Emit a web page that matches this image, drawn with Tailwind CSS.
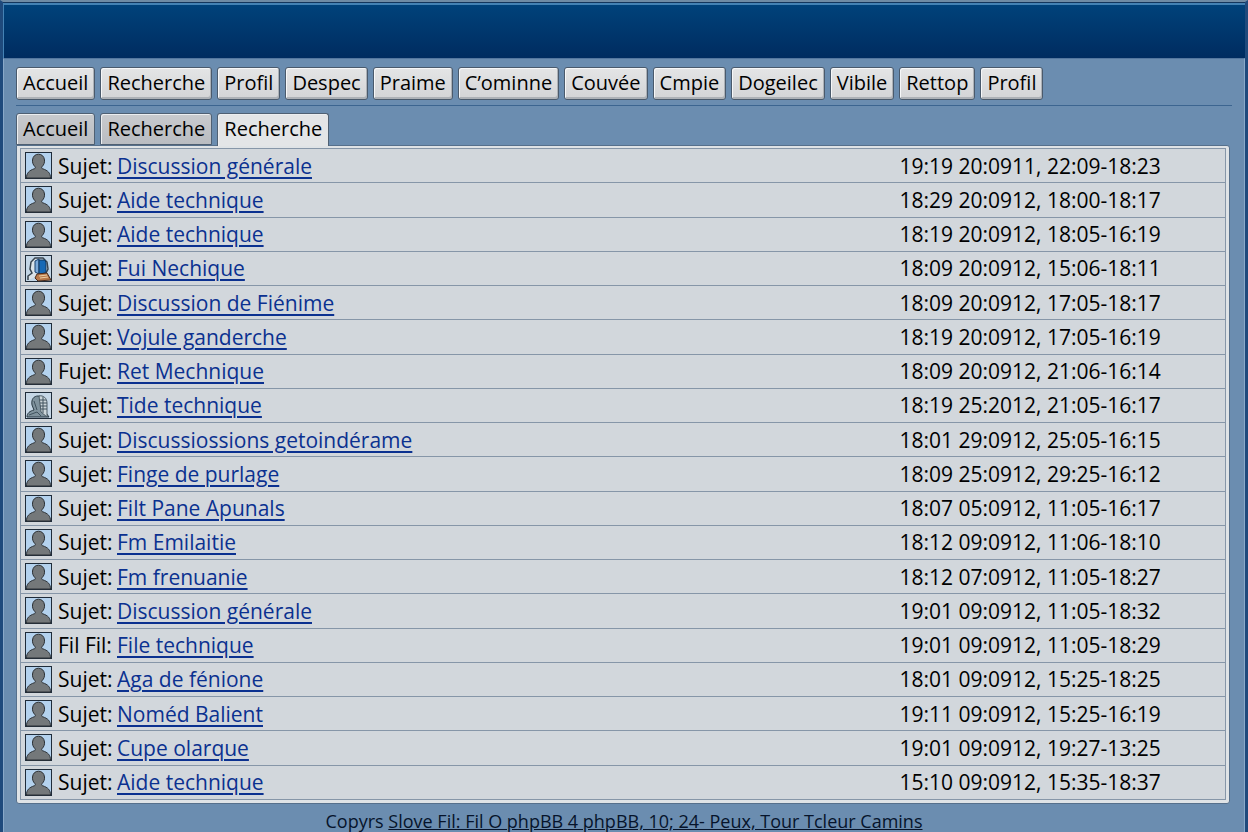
<!DOCTYPE html>
<html lang="fr">

<head>
    <meta charset="UTF-8" />
    <meta name="viewport" content="width=device-width, initial-scale=1.0" />
    <script src="https://cdn.jsdelivr.net/npm/@tailwindcss/browser@4"></script>
    <title>Forum - Recherche</title>
</head>

<body class="h-screen overflow-hidden flex flex-col bg-[#6b8db0] border-x-3 border-t-2 border-x-[#1f4a7c] border-t-[#6f8ba4] font-['Open_Sans','Noto_Sans',sans-serif] text-[21px] leading-7 text-black">
    <header class="h-14 shrink-0 border-t border-[#14365c] shadow-[inset_1px_2px_0_#4482b4] bg-linear-to-b from-[#00437b] to-[#002c60]"></header>

    <div class="flex-1 min-h-0 flex flex-col px-3 pt-2 border-x border-t border-[#8aa9c9] border-t-[#54779f]">
        <nav id="main-nav" class="flex gap-[5px] pb-[5px] border-b border-[#3c6590] text-[20px]"></nav>

        <div id="tabs" class="flex gap-[5px] pt-[7px] text-[20px]"></div>

        <main class="flex-1 min-h-0 p-[3px] pt-[2px] mr-[2px] -mt-px bg-[#dfe3e6] border border-[#56708c] rounded-b-[3px] rounded-tr-[3px]">
            <table class="w-full h-full border-collapse border border-[#8696a8] bg-[#d2d7dc]">
                <tbody></tbody>
            </table>
        </main>

        <footer class="h-7 shrink-0 pt-[3px] text-center text-[18px] text-[#06142b] whitespace-nowrap">
            Copyrs <a href="#" class="underline">Slove Fil: Fil O phpBB 4 phpBB, 10; 24- Peux, Tour Tcleur Camins</a>
        </footer>
    </div>
</body>

<script>
    const menu = ["Accueil", "Recherche", "Profil", "Despec", "Praime", "C’ominne", "Couvée", "Cmpie", "Dogeilec", "Vibile", "Rettop", "Profil"];
    const tabs = ["Accueil", "Recherche", "Recherche"];

    const topics = [
        ["Sujet:", "Discussion générale", "19:19 20:0911, 22:09-18:23"],
        ["Sujet:", "Aide technique", "18:29 20:0912, 18:00-18:17"],
        ["Sujet:", "Aide technique", "18:19 20:0912, 18:05-16:19"],
        ["Sujet:", "Fui Nechique", "18:09 20:0912, 15:06-18:11", "book"],
        ["Sujet:", "Discussion de Fiénime", "18:09 20:0912, 17:05-18:17"],
        ["Sujet:", "Vojule ganderche", "18:19 20:0912, 17:05-16:19"],
        ["Fujet:", "Ret Mechnique", "18:09 20:0912, 21:06-16:14"],
        ["Sujet:", "Tide technique", "18:19 25:2012, 21:05-16:17", "sketch"],
        ["Sujet:", "Discussiossions getoindérame", "18:01 29:0912, 25:05-16:15"],
        ["Sujet:", "Finge de purlage", "18:09 25:0912, 29:25-16:12"],
        ["Sujet:", "Filt Pane Apunals", "18:07 05:0912, 11:05-16:17"],
        ["Sujet:", "Fm Emilaitie", "18:12 09:0912, 11:06-18:10"],
        ["Sujet:", "Fm frenuanie", "18:12 07:0912, 11:05-18:27"],
        ["Sujet:", "Discussion générale", "19:01 09:0912, 11:05-18:32"],
        ["Fil Fil:", "File technique", "19:01 09:0912, 11:05-18:29"],
        ["Sujet:", "Aga de fénione", "18:01 09:0912, 15:25-18:25"],
        ["Sujet:", "Noméd Balient", "19:11 09:0912, 15:25-16:19"],
        ["Sujet:", "Cupe olarque", "19:01 09:0912, 19:27-13:25"],
        ["Sujet:", "Aide technique", "15:10 09:0912, 15:35-18:37"],
    ];

    const icons = {
        user: `<rect x=".5" y=".5" width="26" height="26" fill="#b4d2ee" stroke="#1f2c3a"/>
            <path d="M1.500 26C1.500 21 4 18.500 9.500 16.700c1-.4 1.100-1.300.3-2.200C8 12.600 7.300 10.500 7.500 8 7.900 4.300 10.300 2.200 13.500 2.200s5.600 2.100 6 5.800c.2 2.500-.5 4.600-2.300 6.500-.8.900-.7 1.800.3 2.200 5.500 1.800 8 4.300 8 9.300z" fill="#74787a" stroke="#2c3136"/>`,
        book: `<rect x=".5" y=".5" width="26" height="26" fill="#c3d6e6" stroke="#1f2c3a"/>
            <path d="M3 25v-4l4-3-2-4 1-7 4-4 8 0 4 4 1 7-2 4" fill="#dbe3e8" stroke="#37434d" stroke-width="1.500"/>
            <path d="M10 6l4-2v15l-4-2z" fill="#7aa9d8" stroke="#17406f"/>
            <path d="M14 5h6l1 3v10l-7 1z" fill="#1769b5" stroke="#12385f"/>
            <path d="M12 19l10-1 4 7-13 1-3-3z" fill="#b9794a" stroke="#4b2c1c"/>
            <path d="M14 21l8-1M15 23l8-1" stroke="#ecd0a4"/>`,
        sketch: `<rect x=".5" y=".5" width="26" height="26" fill="#c6d7e6" stroke="#1f2c3a"/>
            <path d="M2 25c0-4 3-6 7-7l-2-5c-1-6 2-9 6-9 5 0 8 4 7 9l-1 5 5 7z" fill="#7f929d" stroke="#293944"/>
            <path d="M14 4c4-1 8 2 8 7v14l-6-5z" fill="#ccd5d9" stroke="#4c5c66"/>
            <path d="M15 8h6M15 11h7M15 14h7M16 17h6M18 5v16M4 23l8-3 4 4M9 9l3 9" fill="none" stroke="#40525e"/>`,
    };

    function navTemplate(label) {
        return `<button type="button" class="h-[33px] px-[6px] pb-[2px] rounded-[3px] border border-[#4a5a6c] bg-linear-to-b from-[#e4e5e6] to-[#d3d4d6] shadow-[inset_1px_1px_0_#f6f7f8,inset_-1px_-2px_0_#adb1b6] whitespace-nowrap cursor-pointer">${label}</button>`;
    }

    function tabTemplate(label, active) {
        const look = active
            ? "relative z-10 h-[33px] pb-[2px] bg-[#e3e5e7] border-b-0"
            : "h-[32px] bg-linear-to-b from-[#c9cbce] to-[#b9bcc1]";
        return `<button type="button" class="${look} px-[6px] rounded-t-[3px] border border-[#4f6073] shadow-[inset_1px_1px_0_#eceef0] whitespace-nowrap cursor-pointer">${label}</button>`;
    }

    function rowTemplate([kind, title, date, icon = "user"]) {
        return `<tr class="border-b border-[#8696a8]">
            <td class="p-0 pl-1">
                <div class="flex items-center">
                    <svg class="size-[27px] mr-[6px]" viewBox="0 0 27 27">${icons[icon]}</svg>
                    <span class="w-[59px] whitespace-nowrap">${kind}</span>
                    <a href="#" class="text-[#0b3190] underline underline-offset-3 decoration-2">${title}</a>
                </div>
            </td>
            <td class="p-0 w-[326px] whitespace-nowrap">${date}</td>
        </tr>`;
    }

    document.getElementById("main-nav").innerHTML = menu.map(navTemplate).join("");
    document.getElementById("tabs").innerHTML = tabs.map((label, i) => tabTemplate(label, i === 2)).join("");
    document.querySelector("tbody").innerHTML = topics.map(rowTemplate).join("");
</script>

</html>
